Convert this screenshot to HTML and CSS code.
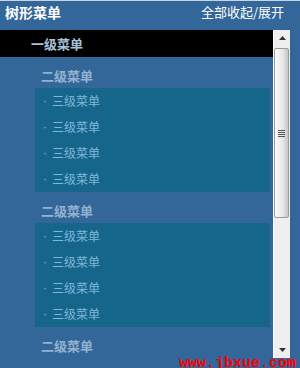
FILE: index.html
```html
<!DOCTYPE html>
<html lang="zh-CN">
<head>
    <meta charset="UTF-8">
    <title>树形菜单</title>
    <link rel="stylesheet" href="styles.css">
</head>
<body>
    <div id="tree">
        <div class="tree-head">
            <h1>树形菜单</h1>
            <a class="toggle-all" href="#">全部收起/展开</a>
        </div>
        <div class="tree-body">
            <div class="tree-list">
                <div class="level1">一级菜单</div>

                <div class="level2">二级菜单</div>
                <ul class="level3">
                    <li><span class="dot">·</span>三级菜单</li>
                    <li><span class="dot">·</span>三级菜单</li>
                    <li><span class="dot">·</span>三级菜单</li>
                    <li><span class="dot">·</span>三级菜单</li>
                </ul>

                <div class="level2">二级菜单</div>
                <ul class="level3">
                    <li><span class="dot">·</span>三级菜单</li>
                    <li><span class="dot">·</span>三级菜单</li>
                    <li><span class="dot">·</span>三级菜单</li>
                    <li><span class="dot">·</span>三级菜单</li>
                </ul>

                <div class="level2">二级菜单</div>
            </div>
            <div class="scrollbar">
                <div class="sb-btn">
                    <svg width="7" height="4" viewBox="0 0 7 4"><path d="M3.5 0L7 4H0z" fill="#333"/></svg>
                </div>
                <div class="sb-track">
                    <div class="sb-thumb">
                        <svg width="7" height="7" viewBox="0 0 7 7"><path d="M0 0.5h7M0 2.5h7M0 4.5h7M0 6.5h7" stroke="#555" stroke-width="1"/></svg>
                    </div>
                </div>
                <div class="sb-btn">
                    <svg width="7" height="4" viewBox="0 0 7 4"><path d="M0 0H7L3.5 4z" fill="#333"/></svg>
                </div>
            </div>
        </div>
        <div class="watermark">www.jbxue.com</div>
    </div>
</body>
</html>
```

FILE: styles.css
```css
body {
    margin: 0;
    padding: 0;
    background-color: #336699;
    font-family: "Noto Sans CJK SC", "Liberation Sans", sans-serif;
}

#tree {
    position: relative;
    width: 300px;
    height: 368px;
    overflow: hidden;
    border-top: 1px solid #c8d4e0;
    box-sizing: border-box;
}

.tree-head {
    display: flex;
    justify-content: space-between;
    align-items: center;
    height: 29px;
    padding: 0 16px 0 5px;
    margin-top: -4px;
}

.tree-head h1 {
    margin: 0;
    font-size: 14px;
    font-weight: bold;
    color: #fff;
}

.toggle-all {
    font-size: 13px;
    color: #fff;
    text-decoration: none;
}

.tree-body {
    display: flex;
    width: 290px;
    height: 328px;
    margin-top: 4px;
}

.tree-list {
    width: 273px;
    overflow: hidden;
}

.level1 {
    height: 27px;
    line-height: 27px;
    padding-left: 31px;
    background-color: #000;
    color: #a9c1d9;
    font-size: 13px;
    font-weight: bold;
}

.level2 {
    height: 31px;
    line-height: 25px;
    padding-top: 6px;
    padding-left: 41px;
    box-sizing: border-box;
    color: #94b2cf;
    font-size: 13px;
    font-weight: bold;
}

.level3 {
    list-style: none;
    margin: 0 3px 0 35px;
    padding: 0;
    background-color: #16668c;
}

.level3 li {
    display: flex;
    height: 26px;
    line-height: 26px;
    padding-left: 8px;
    color: #7fb6d6;
    font-size: 12px;
}

.level3 .dot {
    width: 9px;
    font-family: "Liberation Sans", sans-serif;
}

/* scrollbar drawn by hand */
.scrollbar {
    display: flex;
    flex-direction: column;
    width: 17px;
    background-color: #efefef;
    border-left: 1px solid #fff;
    box-sizing: border-box;
}

.sb-btn {
    display: flex;
    align-items: center;
    justify-content: center;
    height: 16px;
}

.sb-track {
    flex: 1;
    padding-top: 2px;
}

.sb-thumb {
    display: flex;
    align-items: center;
    justify-content: center;
    height: 170px;
    margin: 0 1px 0 0;
    border: 1px solid #9a9a9a;
    border-radius: 2px;
    box-sizing: border-box;
    background: linear-gradient(to right, #fbfbfb, #e6e6e6 60%, #c6c6c6);
}

.watermark {
    position: absolute;
    right: 4px;
    bottom: -4px;
    font-family: "Liberation Mono", monospace;
    font-size: 15px;
    font-weight: bold;
    color: #ff0000;
}
```
